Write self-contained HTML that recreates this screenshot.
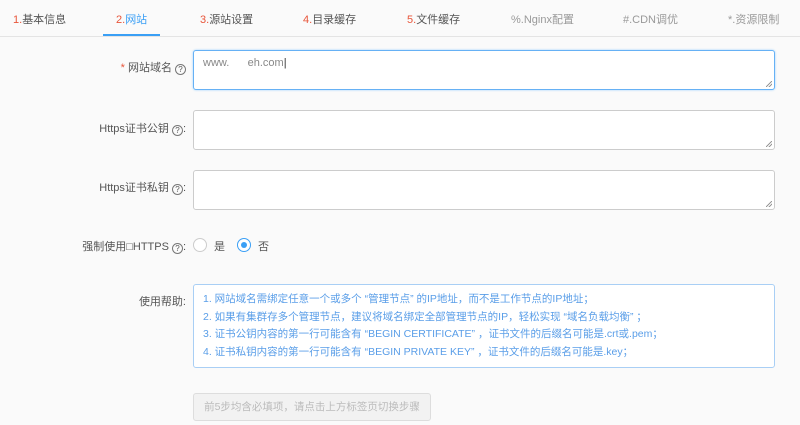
<!DOCTYPE html>
<html><head><meta charset="utf-8"><style>
*{box-sizing:border-box;margin:0;padding:0}
body{width:800px;height:425px;background:#fafafa;font-family:"Liberation Sans","Noto Sans CJK SC",sans-serif;font-size:11px;color:#555;position:relative;overflow:hidden}
.tabs{position:absolute;left:0;top:0;width:800px;height:37px;border-bottom:1px solid #e4e4e4}
.tab{position:absolute;top:11px;font-size:11px;color:#555;white-space:nowrap}
.tab b{font-weight:normal;color:#e8553a}
.tab.g{color:#999}
.ul{position:absolute;left:103px;top:34px;width:57px;height:2px;background:#3a9ff5}
.lbl{position:absolute;right:614px;font-size:11px;color:#555;white-space:nowrap}
.q{display:inline-block;width:11px;height:11px;border:1px solid #777;border-radius:50%;font-size:8px;line-height:9px;text-align:center;vertical-align:-1px;margin-left:3px}
.inp{position:absolute;left:193px;width:582px;height:40px;background:#fff;border:1px solid #ccc;border-radius:3px}
.inp.f{border-color:#66b1f5;box-shadow:0 0 2px #9cd0ff}
.inp::after{content:"";position:absolute;right:2px;bottom:2px;width:6px;height:6px;background:linear-gradient(135deg,transparent 45%,#999 45%,#999 55%,transparent 55%,transparent 70%,#999 70%,#999 80%,transparent 80%)}
.help{position:absolute;left:193px;top:284px;width:582px;height:84px;border:1px solid #a9cff5;background:#fff;border-radius:3px;padding:6px 0 0 9px;color:#5a9ee8;font-size:10.5px;line-height:17.5px;white-space:nowrap}
.btn{position:absolute;left:193px;top:393px;width:238px;height:28px;border:1px solid #ddd;background:#f2f2f2;border-radius:3px;color:#bbb;font-size:10.5px;text-align:center;line-height:26px}
.radio{position:absolute;width:14px;height:14px;border-radius:50%;border:1px solid #ccc;background:#fff;top:238px}
</style></head><body>
<div class="tabs">
<span class="tab" style="left:13px"><b>1.</b>基本信息</span>
<span class="tab" style="left:116px;color:#3a9ff5"><b>2.</b>网站</span>
<span class="tab" style="left:200px"><b>3.</b>源站设置</span>
<span class="tab" style="left:303px"><b>4.</b>目录缓存</span>
<span class="tab" style="left:407px"><b>5.</b>文件缓存</span>
<span class="tab g" style="left:511px">%.Nginx配置</span>
<span class="tab g" style="left:623px">#.CDN调优</span>
<span class="tab g" style="left:728px">*.资源限制</span>
<div class="ul"></div>
</div>
<div class="lbl" style="top:59px"><span style="color:#e8553a">*</span> 网站域名<span class="q">?</span></div>
<div class="inp f" style="top:50px"><span style="position:absolute;left:9px;top:6px;color:#888;font-size:11px">www.&nbsp;&nbsp;&nbsp;&nbsp;&nbsp;&nbsp;eh.com<span style="color:#333">|</span></span></div>
<div class="lbl" style="top:120px">Https证书公钥<span class="q">?</span>:</div>
<div class="inp" style="top:110px"></div>
<div class="lbl" style="top:179px">Https证书私钥<span class="q">?</span>:</div>
<div class="inp" style="top:170px"></div>
<div class="lbl" style="top:238px">强制使用□HTTPS<span class="q">?</span>:</div>
<div class="radio" style="left:193px"></div><span style="position:absolute;left:214px;top:238px">是</span>
<div class="radio" style="left:237px;border-color:#3a9ff5"><div style="position:absolute;left:3px;top:3px;width:6px;height:6px;border-radius:50%;background:#3a9ff5"></div></div><span style="position:absolute;left:258px;top:238px">否</span>
<div class="lbl" style="top:293px">使用帮助:</div>
<div class="help">1. 网站域名需绑定任意一个或多个 “管理节点” 的IP地址，而不是工作节点的IP地址；<br>2. 如果有集群存多个管理节点，建议将域名绑定全部管理节点的IP，轻松实现 “域名负载均衡” ；<br>3. 证书公钥内容的第一行可能含有 “BEGIN CERTIFICATE” ，证书文件的后缀名可能是.crt或.pem；<br>4. 证书私钥内容的第一行可能含有 “BEGIN PRIVATE KEY” ，证书文件的后缀名可能是.key；</div>
<div class="btn">前5步均含必填项，请点击上方标签页切换步骤</div>
</body></html>
